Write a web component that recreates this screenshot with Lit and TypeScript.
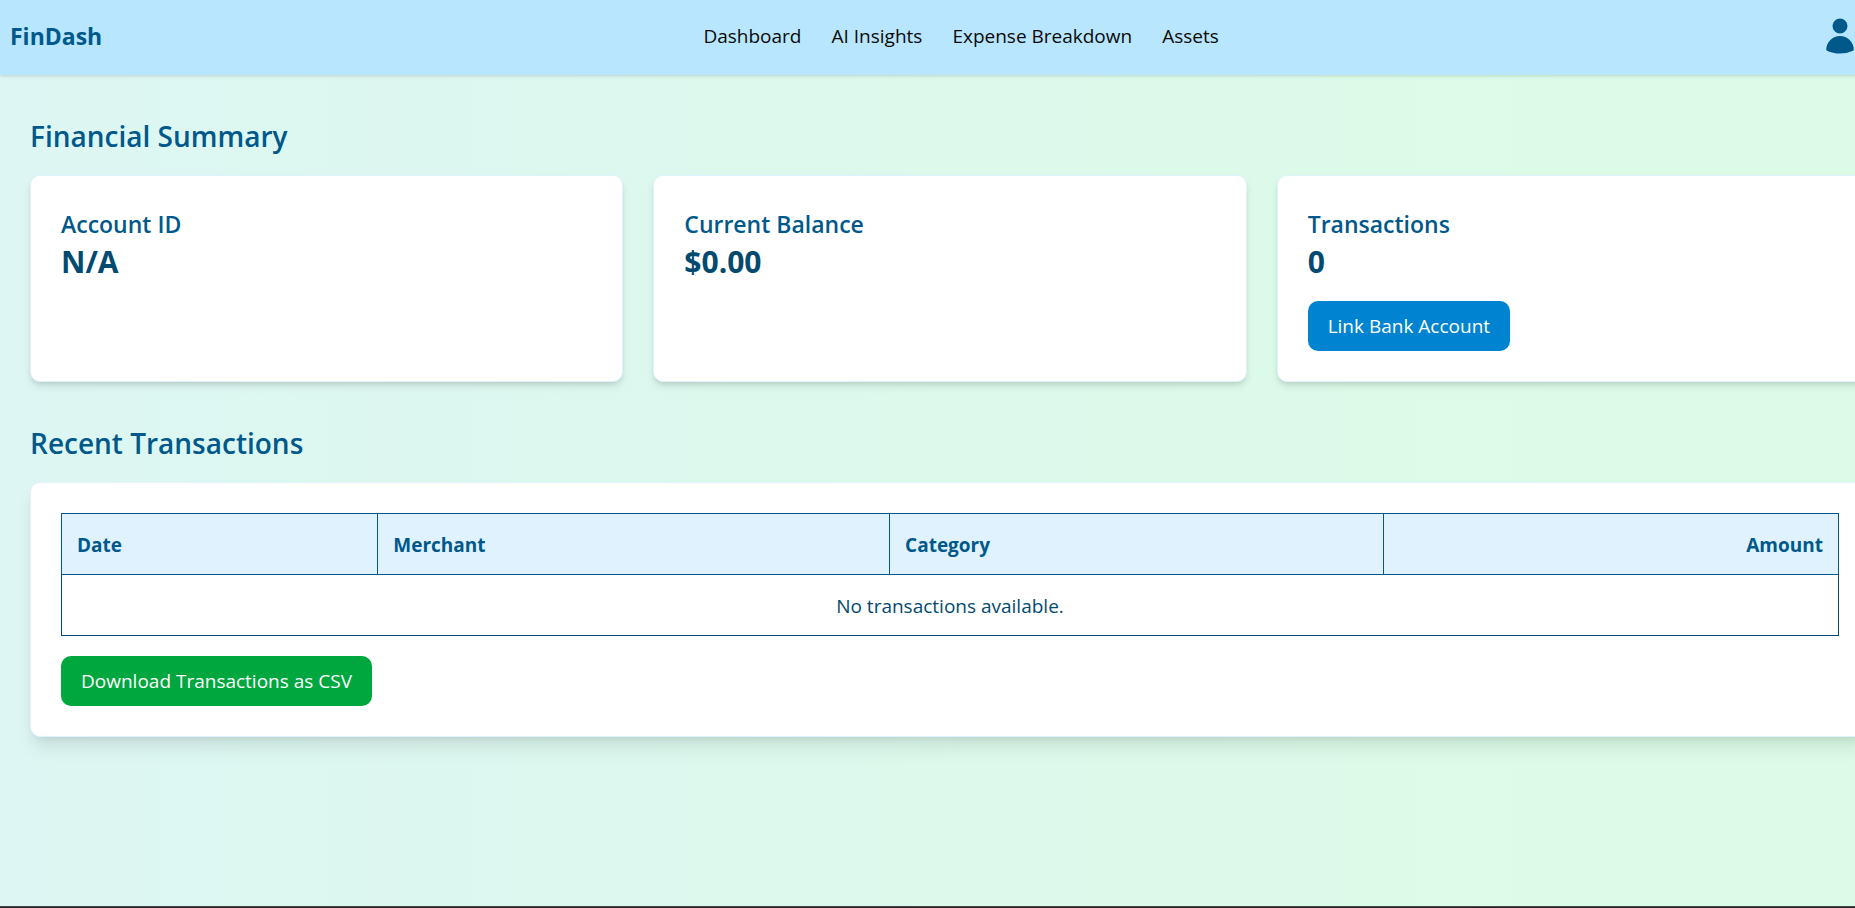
import { LitElement, html, css, nothing } from "lit";
import { customElement, property } from "lit/decorators.js";

interface Summary {
  label: string;
  value: string;
  action?: string;
}

const NAV = ["Dashboard", "AI Insights", "Expense Breakdown", "Assets"];

const SUMMARY: Summary[] = [
  { label: "Account ID", value: "N/A" },
  { label: "Current Balance", value: "$0.00" },
  { label: "Transactions", value: "0", action: "Link Bank Account" },
];

@customElement("summary-card")
export class SummaryCard extends LitElement {
  @property() label = "";
  @property() value = "";
  @property() action = "";

  static styles = css`
    :host {
      display: block;
      box-sizing: border-box;
      padding: 30px;
      border: 1px solid #dff2fe;
      border-radius: 10px;
      background: #fff;
      box-shadow: 0 5px 8px -1px rgba(0, 0, 0, 0.1), 0 3px 5px -2px rgba(0, 0, 0, 0.1);
    }
    .label {
      margin: 0;
      font-size: 23px;
      line-height: 36px;
      font-weight: 600;
      color: #00598a;
    }
    .value {
      margin: 0;
      font-size: 30px;
      line-height: 40px;
      font-weight: 700;
      color: #024a70;
    }
    .action {
      display: block;
      height: 50px;
      margin-top: 19px;
      padding: 0 20px;
      border: 0;
      border-radius: 10px;
      background: #0084d1;
      color: #fff;
      font: inherit;
      font-size: 19px;
      cursor: pointer;
    }
  `;

  render() {
    return html`
      <h3 class="label">${this.label}</h3>
      <p class="value">${this.value}</p>
      ${this.action ? html`<button class="action" type="button">${this.action}</button>` : nothing}
    `;
  }
}

@customElement("app-root")
export class AppRoot extends LitElement {
  static styles = css`
    :host {
      display: flex;
      flex-direction: column;
      min-height: 100vh;
      overflow: hidden;
      font-family: "Open Sans", "Noto Sans", sans-serif;
      font-size: 19px;
      line-height: 30px;
      color: #024a70;
      background: linear-gradient(to right, #ddf6f3, #dcfbe7 85%);
    }
    .header {
      display: flex;
      align-items: center;
      justify-content: space-between;
      box-sizing: border-box;
      width: calc(100% + 15px);
      height: 75px;
      padding: 0 10px 4px;
      background: #b8e6fe;
      box-shadow: 0 1px 4px rgba(0, 0, 0, 0.1), 0 1px 3px -1px rgba(0, 0, 0, 0.1);
    }
    .brand {
      font-size: 23px;
      font-weight: 700;
      color: #00598a;
    }
    .nav {
      display: flex;
      gap: 30px;
    }
    .link {
      color: #0a0a0a;
      text-decoration: none;
    }
    .profile {
      display: block;
      width: 40px;
      height: 40px;
      padding: 0;
      border: 0;
      background: none;
      color: #00598a;
      cursor: pointer;
    }
    .icon {
      display: block;
      width: 40px;
      height: 40px;
    }
    .main {
      flex: 1;
      display: flex;
      flex-direction: column;
      gap: 40px;
      box-sizing: border-box;
      width: calc(100% + 45px);
      padding: 40px 30px;
    }
    .title {
      margin: 0 0 18px;
      font-size: 28px;
      line-height: 42px;
      font-weight: 600;
      color: #00598a;
    }
    .cards {
      display: grid;
      grid-template-columns: repeat(3, 1fr);
      gap: 30px;
    }
    .panel {
      padding: 30px;
      border: 1px solid #dff2fe;
      border-radius: 10px;
      background: #fff;
      box-shadow: 0 13px 19px -4px rgba(0, 0, 0, 0.1), 0 5px 8px -5px rgba(0, 0, 0, 0.1);
    }
    .table {
      width: 100%;
      table-layout: fixed;
      border-collapse: collapse;
    }
    .date {
      width: 17.8%;
    }
    .merchant {
      width: 28.8%;
    }
    .category {
      width: 27.8%;
    }
    .head {
      box-sizing: border-box;
      padding: 16px 15px 14px;
      border: 1px solid #00598a;
      background: #dff2fe;
      color: #00598a;
      font-size: 19px;
      font-weight: 700;
      text-align: left;
    }
    .amount {
      text-align: right;
    }
    .empty {
      padding: 16px 15px 14px;
      border: 1px solid #024a70;
      text-align: center;
    }
    .download {
      display: block;
      height: 50px;
      margin-top: 20px;
      padding: 0 20px;
      border: 0;
      border-radius: 10px;
      background: #00a63e;
      color: #fff;
      font: inherit;
      cursor: pointer;
    }
    .footer {
      height: 1px;
      border-top: 1px solid #4a4a4a;
      background: #1f1f1f;
    }
  `;

  render() {
    return html`
      <header class="header">
        <div class="brand">FinDash</div>
        <nav class="nav">${NAV.map((name) => html`<a class="link" href="#">${name}</a>`)}</nav>
        <button class="profile" type="button" aria-label="Profile">
          <svg class="icon" viewBox="0 0 24 24" fill="currentColor" aria-hidden="true">
            <path
              fill-rule="evenodd"
              d="M7.5 6a4.5 4.5 0 1 1 9 0 4.5 4.5 0 0 1-9 0ZM3.751 20.105a8.25 8.25 0 0 1 16.498 0 .75.75 0 0 1-.437.695A18.683 18.683 0 0 1 12 22.5c-2.786 0-5.433-.608-7.812-1.7a.75.75 0 0 1-.437-.695Z"
            />
          </svg>
        </button>
      </header>
      <main class="main">
        <section>
          <h2 class="title">Financial Summary</h2>
          <div class="cards">
            ${SUMMARY.map(
              (s) => html`<summary-card .label=${s.label} .value=${s.value} .action=${s.action ?? ""}></summary-card>`
            )}
          </div>
        </section>
        <section>
          <h2 class="title">Recent Transactions</h2>
          <div class="panel">
            <table class="table">
              <thead>
                <tr>
                  <th class="head date" scope="col">Date</th>
                  <th class="head merchant" scope="col">Merchant</th>
                  <th class="head category" scope="col">Category</th>
                  <th class="head amount" scope="col">Amount</th>
                </tr>
              </thead>
              <tbody>
                <tr>
                  <td class="empty" colspan="4">No transactions available.</td>
                </tr>
              </tbody>
            </table>
            <button class="download" type="button">Download Transactions as CSV</button>
          </div>
        </section>
      </main>
      <footer class="footer"></footer>
    `;
  }
}
